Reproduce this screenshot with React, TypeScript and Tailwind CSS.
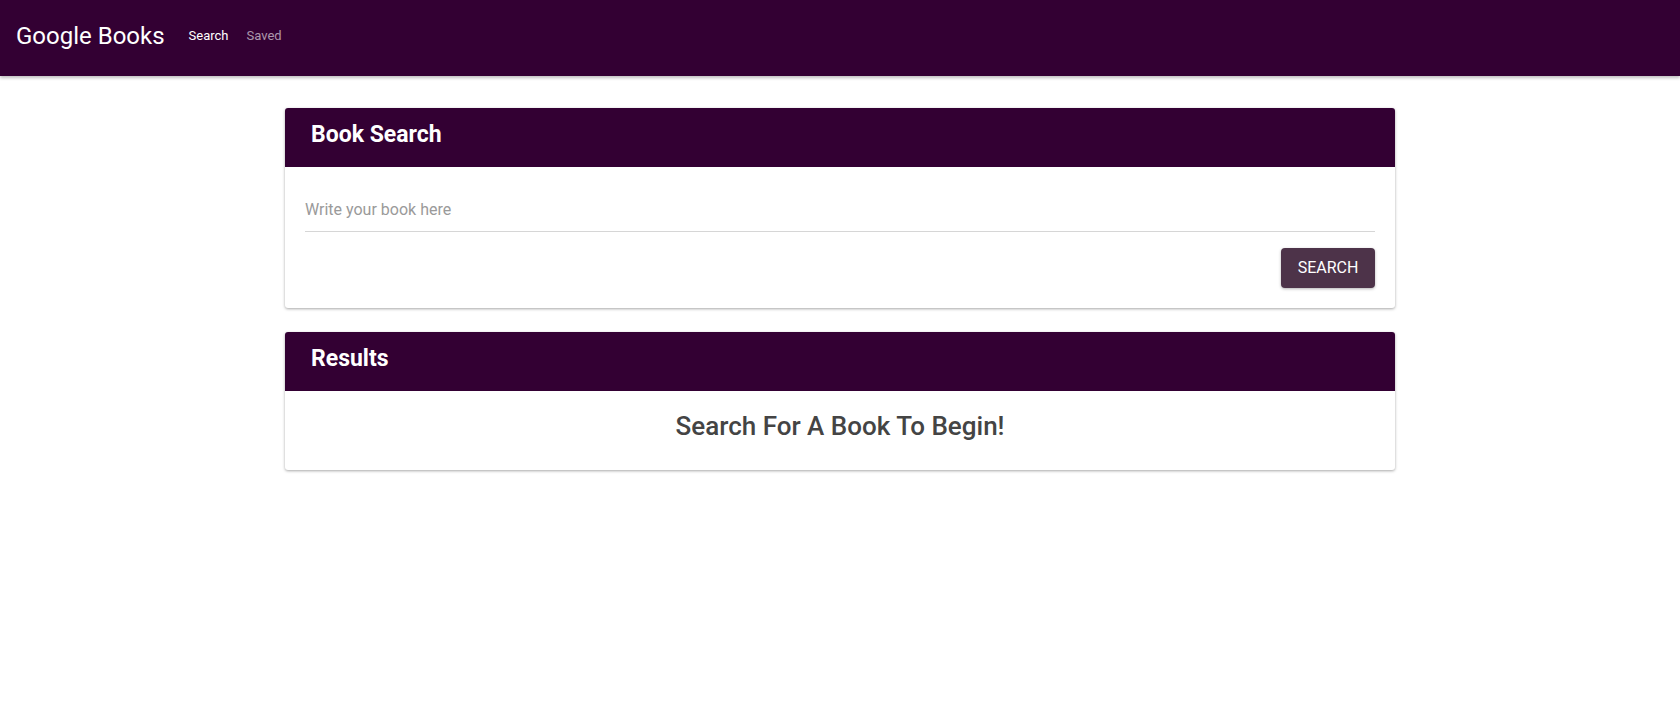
import { useState } from "react";

export default function App() {
  const [query, setQuery] = useState("");

  return (
    <div className="min-h-screen bg-white font-['Roboto',sans-serif]">
      {/* Top bar */}
      <header className="flex h-[76px] items-center bg-[#330033] px-4 pb-1 shadow-[0_2px_3px_rgba(0,0,0,0.25)]">
        <h1 className="text-[24px] font-normal leading-none text-white">Google Books</h1>
        <nav className="ml-6 flex gap-[18px] text-[13px]">
          <a className="text-white">Search</a>
          <a className="text-white/60">Saved</a>
        </nav>
      </header>

      <main className="mx-auto mt-8 flex w-[1110px] flex-col gap-6">
        {/* Search card */}
        <section className="overflow-hidden rounded-[3px] bg-white shadow-[0_1px_3px_rgba(0,0,0,0.35)]">
          <div className="flex h-[59px] items-center bg-[#330033] px-[26px] pb-[4px]">
            <h2 className="text-[23px] font-bold text-white">Book Search</h2>
          </div>
          <div className="px-5 pt-[31px] pb-5">
            <input
              value={query}
              onChange={(e) => setQuery(e.target.value)}
              placeholder="Write your book here"
              className="w-full border-b border-[#d6d6d6] pb-[9px] text-[16px] text-[#333] outline-none placeholder:text-[#9a9a9a]"
            />
            <div className="mt-[16px] flex justify-end">
              <button className="h-10 w-[94px] rounded-[4px] bg-[#4d3349] text-[16px] uppercase text-white shadow-[0_1px_3px_rgba(0,0,0,0.3)]">
                Search
              </button>
            </div>
          </div>
        </section>

        {/* Results card */}
        <section className="overflow-hidden rounded-[3px] bg-white shadow-[0_1px_3px_rgba(0,0,0,0.35)]">
          <div className="flex h-[59px] items-center bg-[#330033] px-[26px] pb-[4px]">
            <h2 className="text-[23px] font-bold text-white">Results</h2>
          </div>
          <div className="flex h-[79px] items-center justify-center pb-2">
            <h3 className="text-[26px] font-medium text-[#444]">Search For A Book To Begin!</h3>
          </div>
        </section>
      </main>
    </div>
  );
}
